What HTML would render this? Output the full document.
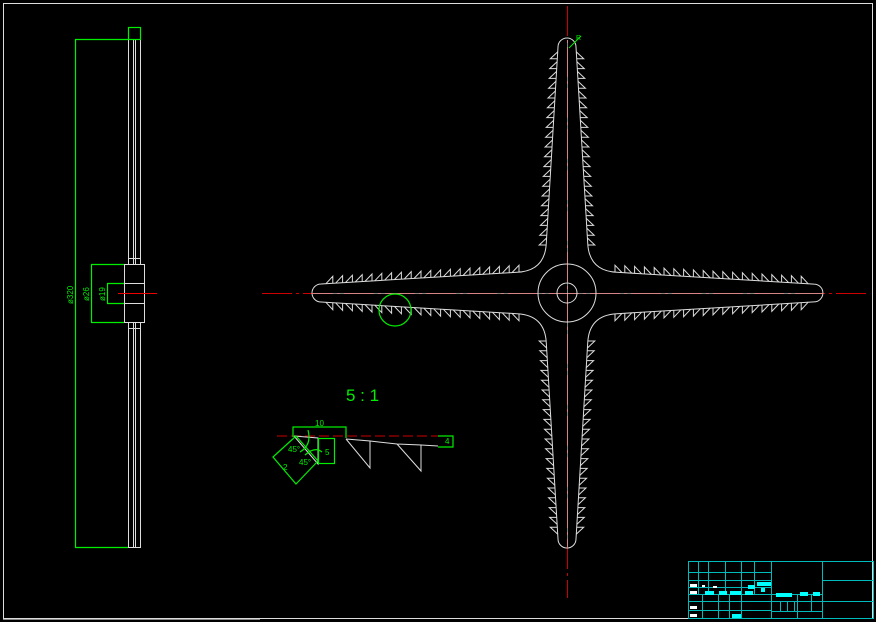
<!DOCTYPE html>
<html><head><meta charset="utf-8"><style>
html,body{margin:0;padding:0;background:#000;width:876px;height:622px;overflow:hidden}
svg{display:block}
text{font-family:"Liberation Sans",sans-serif}
</style></head><body>
<svg id="s" width="876" height="622" viewBox="0 0 876 622" xmlns="http://www.w3.org/2000/svg">
<rect x="3.5" y="3.5" width="869" height="615" fill="none" stroke="#ddd" stroke-width="1"/>
<!-- side view -->
<g stroke="#ddd" fill="none" stroke-width="1">
<rect x="128.5" y="39.5" width="12" height="508"/>
<line x1="133.5" y1="39" x2="133.5" y2="547"/>
<line x1="135.5" y1="39" x2="135.5" y2="547"/>
<rect x="124.5" y="264.5" width="20" height="58" fill="#000"/>
<line x1="124" y1="283.5" x2="144" y2="283.5"/>
<line x1="124" y1="303.5" x2="144" y2="303.5"/>
<rect x="128.5" y="258.5" width="12" height="6"/>
<rect x="128.5" y="322.5" width="12" height="6"/>
</g>
<g stroke="#0e0" fill="none" stroke-width="1.2">
<rect x="128.5" y="27.5" width="12" height="12"/>
<line x1="75.5" y1="39.5" x2="75.5" y2="547.5"/>
<line x1="75" y1="39.5" x2="128" y2="39.5"/>
<line x1="75" y1="547.5" x2="128" y2="547.5"/>
<line x1="91.5" y1="264.5" x2="91.5" y2="322.5"/>
<line x1="91" y1="264.5" x2="124" y2="264.5"/>
<line x1="91" y1="322.5" x2="124" y2="322.5"/>
<line x1="107.5" y1="283.5" x2="107.5" y2="303.5"/>
<line x1="107" y1="283.5" x2="124" y2="283.5"/>
<line x1="107" y1="303.5" x2="124" y2="303.5"/>
</g>
<g fill="#0e0" font-size="8">
<text transform="translate(73,304) rotate(-90)">ø320</text>
<text transform="translate(89,301) rotate(-90)">ø26</text>
<text transform="translate(105,301) rotate(-90)">ø19</text>
</g>
<line x1="118" y1="293.5" x2="157" y2="293.5" stroke="#e00"/>
<!-- centerlines -->
<line x1="567.5" y1="6" x2="567.5" y2="598" stroke="#c00" stroke-dasharray="30,4,3,4"/>
<line x1="262" y1="293.5" x2="868" y2="293.5" stroke="#c00" stroke-dasharray="30,4,3,4"/>
<g id="star" stroke="#ddd" fill="none" stroke-width="1"></g>
<circle cx="567" cy="293" r="29" stroke="#ddd" fill="none"/>
<circle cx="567" cy="293" r="10" stroke="#ddd" fill="none"/>
<line x1="567.5" y1="40" x2="567.5" y2="547" stroke="#ddd" opacity="0.6"/>
<line x1="313" y1="293.5" x2="822" y2="293.5" stroke="#ddd" opacity="0.6"/>
<circle cx="395" cy="310" r="16" stroke="#0e0" fill="none" stroke-width="1.2"/>
<line x1="569" y1="48" x2="581" y2="36" stroke="#0e0"/>
<text x="576" y="40" fill="#0e0" font-size="7">R</text>
<!-- detail -->
<text x="346" y="401" fill="#0e0" font-size="17" font-family="Liberation Mono,monospace">5 : 1</text>
<line x1="277" y1="436" x2="453" y2="436" stroke="#c00" stroke-dasharray="10,4"/>
<g stroke="#ddd" fill="none">
<polyline points="294,436 318,438 318,464 294,436"/>
<polyline points="346,439 370,441 370,468 346,439"/>
<polyline points="370,441 397,444 421,445 421,471 397,444"/>
<line x1="421" y1="445" x2="438" y2="446"/>
</g>
<g stroke="#0e0" fill="none" stroke-width="1.2">
<polyline points="293,437 293,427 346,427 346,438"/>
<rect x="318.5" y="438.5" width="16" height="25"/>
<polygon points="273,457 296,436 318,461 296,484"/>
<polyline points="438,447 453,447 453,436 438,436"/>
<path d="M308,430 Q312,445 300,452"/><path d="M305,455 Q315,446 322,452"/>
</g>
<g fill="#0e0" font-size="8">
<text x="315" y="426">10</text><text x="325" y="455">5</text>
<text x="288" y="452">45°</text><text x="299" y="465">45°</text>
<text x="283" y="470">2</text><text x="445" y="444">4</text>
</g>
<!-- title block -->
<g stroke="#0bb" fill="none" stroke-width="1">
<rect x="688.5" y="561.5" width="185" height="57"/>
<line x1="771.5" y1="561" x2="771.5" y2="619"/>
<line x1="822.5" y1="561" x2="822.5" y2="619"/>
<line x1="822" y1="580.5" x2="874" y2="580.5"/>
<line x1="771" y1="601.5" x2="874" y2="601.5"/>
<line x1="771" y1="594.5" x2="822" y2="594.5"/>
<line x1="771" y1="611.5" x2="822" y2="611.5"/>
<line x1="688" y1="572.5" x2="771" y2="572.5"/>
<line x1="688" y1="580.5" x2="771" y2="580.5"/>
<line x1="688" y1="587.5" x2="771" y2="587.5"/>
<line x1="688" y1="594.5" x2="771" y2="594.5"/>
<line x1="688" y1="601.5" x2="771" y2="601.5"/>
<line x1="688" y1="610.5" x2="771" y2="610.5"/>
<line x1="698.5" y1="561" x2="698.5" y2="594"/><line x1="708.5" y1="561" x2="708.5" y2="594"/>
<line x1="725.5" y1="561" x2="725.5" y2="594"/><line x1="741.5" y1="561" x2="741.5" y2="619"/>
<line x1="754.5" y1="561" x2="754.5" y2="594"/>
<line x1="702.5" y1="594" x2="702.5" y2="619"/><line x1="718.5" y1="594" x2="718.5" y2="619"/>
<line x1="729.5" y1="594" x2="729.5" y2="619"/>
<line x1="780.5" y1="601" x2="780.5" y2="611"/><line x1="787.5" y1="601" x2="787.5" y2="611"/><line x1="794.5" y1="601" x2="794.5" y2="611"/>
<line x1="797.5" y1="594" x2="797.5" y2="619"/><line x1="811.5" y1="594" x2="811.5" y2="611"/>
</g>
<g fill="#0ff">
<rect x="757" y="582" width="14" height="4"/><rect x="761" y="588" width="4" height="4"/>
<rect x="705" y="591" width="9" height="4"/><rect x="719" y="591" width="8" height="4"/><rect x="730" y="591" width="11" height="4"/>
<rect x="745" y="591" width="8" height="4"/><rect x="748" y="585" width="7" height="4"/>
<rect x="776" y="593" width="16" height="4"/><rect x="800" y="592" width="8" height="4"/><rect x="813" y="592" width="7" height="4"/>
<rect x="732" y="614" width="9" height="4"/>
</g>
<g fill="#fff"><rect x="690" y="584" width="7" height="3"/><rect x="690" y="591" width="7" height="3"/><rect x="690" y="606" width="7" height="3"/><rect x="690" y="614" width="7" height="3"/>
<rect x="702" y="585" width="3" height="2"/><rect x="713" y="586" width="4" height="2"/></g>
<line x1="3" y1="619.5" x2="260" y2="619.5" stroke="#888"/>
</svg>
<script>
(function(){
var cx=567,cy=293,g=document.getElementById('star'),NS='http://www.w3.org/2000/svg';
function w(d){return 8+(21-8)*(262-d)/(262-45);}
var arms=[[0,-1],[1,0],[0,1],[-1,0]];
var L=[254,255,254,254];
var d='';
function P(a,dist,side){var u=arms[a],n=[-u[1],u[0]];var ww=w(dist);return [cx+u[0]*dist+n[0]*ww*side,cy+u[1]*dist+n[1]*ww*side];}
var pts=[];
for(var a=0;a<4;a++){
  var u=arms[a],n=[-u[1],u[0]],len=L[a];
  var s=P(a,50,-1);
  d+=(a==0?'M':'L')+s[0].toFixed(1)+','+s[1].toFixed(1);
  var e1=P(a,len-8,-1);d+='L'+e1[0].toFixed(1)+','+e1[1].toFixed(1);
  var e2=P(a,len-8,1);
  d+='A8,8 0 0 1 '+e2[0].toFixed(1)+','+e2[1].toFixed(1);
  var e3=P(a,50,1);d+='L'+e3[0].toFixed(1)+','+e3[1].toFixed(1);
  var b=(a+1)%4,nx=P(b,50,-1);
  var c=[cx+(u[0]+arms[b][0])*22,cy+(u[1]+arms[b][1])*22];
  d+='Q'+c[0].toFixed(1)+','+c[1].toFixed(1)+' '+nx[0].toFixed(1)+','+nx[1].toFixed(1);
  for(var side=-1;side<=1;side+=2){
    for(var t=0;t<30;t++){
      var dist=48+t*9.8;if(dist>len-12)break;
      var base=P(a,dist,side),far=P(a,dist+7,side);
      var tip=[base[0]+n[0]*side*7,base[1]+n[1]*side*7];
      pts.push('M'+far[0].toFixed(1)+','+far[1].toFixed(1)+'L'+tip[0].toFixed(1)+','+tip[1].toFixed(1)+'L'+base[0].toFixed(1)+','+base[1].toFixed(1));
    }
  }
}
d+='Z';
var p=document.createElementNS(NS,'path');p.setAttribute('d',d);g.appendChild(p);
var q=document.createElementNS(NS,'path');q.setAttribute('d',pts.join(''));g.appendChild(q);
})();
</script>
</body></html>
